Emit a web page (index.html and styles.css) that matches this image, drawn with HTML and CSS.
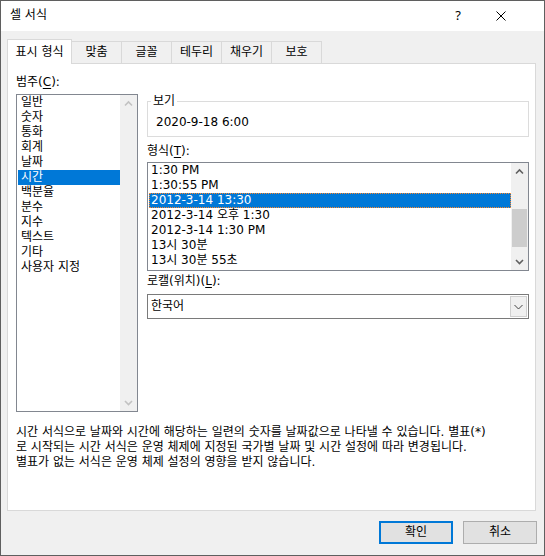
FILE: index.html
```html
<!DOCTYPE html>
<html lang="ko">
<head>
<meta charset="utf-8">
<title>셀 서식</title>
<link rel="stylesheet" href="styles.css">
</head>
<body>
<div class="window">
  <div class="titlebar">
    <span class="title">셀 서식</span>
    <span class="help">?</span>
    <span class="close"><svg width="10" height="10" viewBox="0 0 10 10"><path d="M0.5 0.5 L9.5 9.5 M9.5 0.5 L0.5 9.5" stroke="#000" stroke-width="1" fill="none"/></svg></span>
  </div>
  <div class="main">
    <div class="tabs">
      <div class="tab active">표시 형식</div>
      <div class="tab">맞춤</div>
      <div class="tab">글꼴</div>
      <div class="tab">테두리</div>
      <div class="tab">채우기</div>
      <div class="tab">보호</div>
    </div>
    <div class="panel">
      <div class="panel-top">
        <div class="col-left">
          <div class="label">범주(<u>C</u>):</div>
          <div class="listbox cat">
            <ul class="items">
              <li class="item">일반</li>
              <li class="item">숫자</li>
              <li class="item">통화</li>
              <li class="item">회계</li>
              <li class="item">날짜</li>
              <li class="item selected">시간</li>
              <li class="item">백분율</li>
              <li class="item">분수</li>
              <li class="item">지수</li>
              <li class="item">텍스트</li>
              <li class="item">기타</li>
              <li class="item">사용자 지정</li>
            </ul>
            <div class="scrollbar disabled">
              <div class="sb-btn"><svg width="17" height="17" viewBox="0 0 17 17"><polyline points="5,10.5 8.5,7 12,10.5" fill="none" stroke-width="1.6"/></svg></div>
              <div class="sb-track"></div>
              <div class="sb-btn"><svg width="17" height="17" viewBox="0 0 17 17"><polyline points="5,7 8.5,10.5 12,7" fill="none" stroke-width="1.6"/></svg></div>
            </div>
          </div>
        </div>
        <div class="col-right">
          <fieldset class="group">
            <legend class="legend">보기</legend>
            <div class="sample">2020-9-18 6:00</div>
          </fieldset>
          <div class="label label-fmt">형식(<u>T</u>):</div>
          <div class="listbox fmt">
            <ul class="items">
              <li class="item">1:30 PM</li>
              <li class="item">1:30:55 PM</li>
              <li class="item selected focus">2012-3-14 13:30</li>
              <li class="item">2012-3-14 오후 1:30</li>
              <li class="item">2012-3-14 1:30 PM</li>
              <li class="item">13시 30분</li>
              <li class="item">13시 30분 55초</li>
            </ul>
            <div class="scrollbar">
              <div class="sb-btn"><svg width="17" height="17" viewBox="0 0 17 17"><polyline points="5,10.5 8.5,7 12,10.5" fill="none" stroke-width="1.6"/></svg></div>
              <div class="sb-track"><div class="sb-thumb"></div></div>
              <div class="sb-btn"><svg width="17" height="17" viewBox="0 0 17 17"><polyline points="5,7 8.5,10.5 12,7" fill="none" stroke-width="1.6"/></svg></div>
            </div>
          </div>
          <div class="label label-loc">로캘(위치)(<u>L</u>):</div>
          <div class="combo">
            <span class="combo-text">한국어</span>
            <span class="combo-btn"><svg width="15" height="21" viewBox="0 0 15 21"><polyline points="3.5,9 7.5,13 11.5,9" fill="none" stroke="#444" stroke-width="1"/></svg></span>
          </div>
        </div>
      </div>
      <p class="desc">시간 서식으로 날짜와 시간에 해당하는 일련의 숫자를 날짜값으로 나타낼 수 있습니다. 별표(*)<br>로 시작되는 시간 서식은 운영 체제에 지정된 국가별 날짜 및 시간 설정에 따라 변경됩니다.<br>별표가 없는 서식은 운영 체제 설정의 영향을 받지 않습니다.</p>
    </div>
    <div class="buttons">
      <button class="btn btn-default">확인</button>
      <button class="btn">취소</button>
    </div>
  </div>
</div>
</body>
</html>
```
FILE: styles.css
```css
* { box-sizing: border-box; }
html, body { margin: 0; padding: 0; }
body {
  font-family: "DejaVu Sans", "Noto Sans CJK KR", sans-serif;
  font-size: 12px;
  line-height: 15px;
  color: #000;
  background: #f0f0f0;
}
.window {
  width: 545px;
  height: 556px;
  border: 1px solid #5f5f5f;
  display: flex;
  flex-direction: column;
  background: #f0f0f0;
  overflow: hidden;
}
.titlebar {
  height: 30px;
  flex: none;
  background: #fff;
  display: flex;
  align-items: center;
  padding: 0 38px 1px 9px;
}
.title { flex: 1; }
.help {
  width: 20px;
  text-align: center;
  font-family: "Noto Sans", sans-serif;
  font-size: 13px;
}
.close {
  margin-left: 28px;
  width: 10px;
  height: 10px;
  display: flex;
}
.main {
  flex: 1;
  display: flex;
  flex-direction: column;
  padding: 8px 7px 0 6px;
}
.tabs {
  display: flex;
  align-items: flex-end;
  height: 24px;
}
.tab {
  height: 22px;
  min-width: 51px;
  padding: 0 7.5px;
  border: 1px solid #d9d9d9;
  border-bottom: none;
  margin-left: -1px;
  background: #f0f0f0;
  display: flex;
  align-items: center;
  justify-content: center;
  white-space: nowrap;
}
.tab.active {
  margin-left: 0;
  height: 25px;
  margin-bottom: -1px;
  background: #fff;
  position: relative;
  z-index: 1;
}
.panel {
  width: 529px;
  height: 448px;
  flex: none;
  background: #fff;
  border: 1px solid #d9d9d9;
  padding: 0 0 0 8px;
  display: flex;
  flex-direction: column;
}
.panel-top {
  display: flex;
  gap: 9px;
}
.col-left {
  width: 122px;
  padding-top: 11px;
}
.col-left .label { margin-bottom: 4px; }
.label u { text-decoration: underline; text-underline-offset: 2px; }
.listbox {
  border: 1px solid #828790;
  background: #fff;
  display: flex;
}
.listbox .items {
  list-style: none;
  margin: 0;
  padding: 0;
  flex: 1;
  overflow: hidden;
}
.item {
  height: 15px;
  margin-left: 1px;
  padding-left: 3px;
  white-space: nowrap;
}
.fmt .item { padding-left: 2px; }
.item.selected {
  background: #0078d7;
  color: #fff;
}
.item.focus {
  outline: 1px dotted #ff8728;
  outline-offset: -1px;
}
.cat { height: 318px; }
.scrollbar {
  width: 17px;
  flex: none;
  background: #f0f0f0;
  display: flex;
  flex-direction: column;
}
.sb-btn { height: 17px; flex: none; display: flex; }
.sb-btn svg { stroke: #606060; }
.scrollbar.disabled .sb-btn svg { stroke: #c2c2c2; }
.sb-track { flex: 1; padding-top: 29px; }
.sb-thumb {
  height: 38px;
  margin: 0 1px;
  background: #cdcdcd;
}
.col-right {
  width: 382px;
  padding-top: 30px;
  display: flex;
  flex-direction: column;
}
.group {
  margin: 0;
  min-width: 0;
  border: 1px solid #dcdcdc;
  padding: 6px 8px 6px 8px;
}
.legend {
  padding: 0 2px;
  margin-left: -5px;
}
.label-fmt { margin-top: 7px; margin-bottom: 3px; }
.fmt { height: 109px; }
.label-loc { margin-top: 3px; margin-bottom: 5px; }
.combo {
  height: 25px;
  border: 1px solid #7a7a7a;
  background: #fff;
  display: flex;
  align-items: stretch;
}
.combo-text {
  flex: 1;
  padding-left: 3px;
  display: flex;
  align-items: center;
}
.combo-btn {
  width: 17px;
  margin: 1px;
  background: #f0f0f0;
  border: 1px solid #d0d0d0;
  display: flex;
  align-items: center;
  justify-content: center;
}
.desc {
  margin: 13px 0 0 0;
  white-space: nowrap;
}
.buttons {
  display: flex;
  justify-content: flex-end;
  gap: 10px;
  margin-top: 10px;
}
.btn {
  width: 74px;
  height: 23px;
  padding: 0;
  font: inherit;
  color: #000;
  background: #e1e1e1;
  border: 1px solid #adadad;
}
.btn-default {
  border: 2px solid #0078d7;
}
```
